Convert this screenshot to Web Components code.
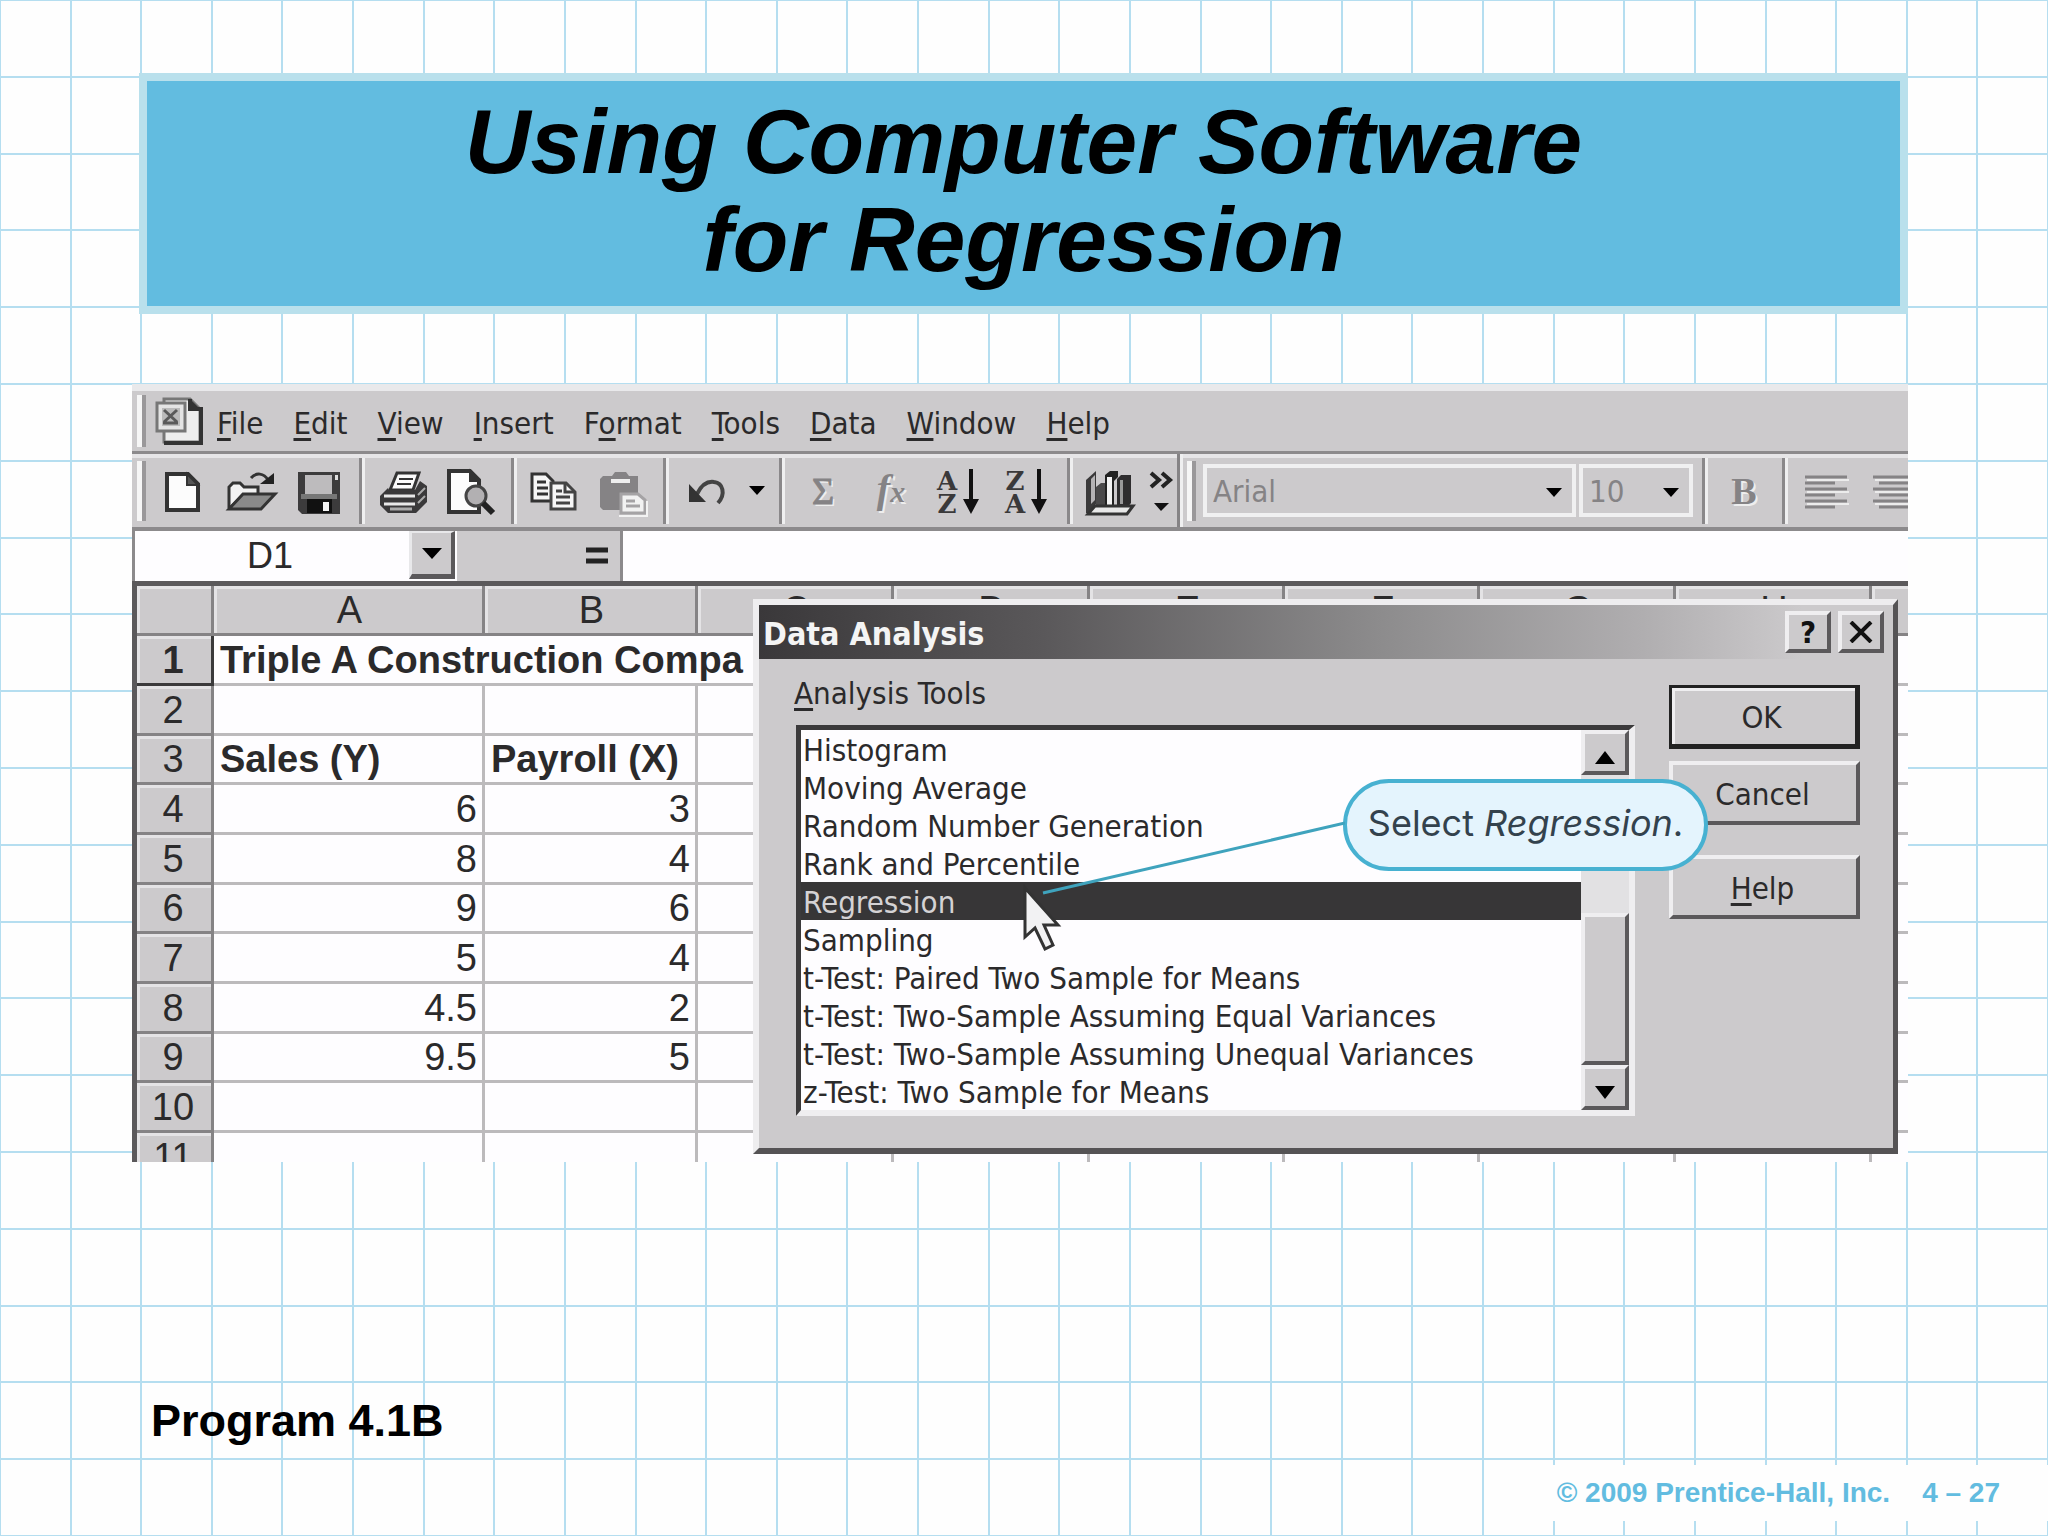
<!DOCTYPE html>
<html lang="en">
<head>
<meta charset="utf-8">
<title>Using Computer Software for Regression</title>
<style>
    body {
        margin: 0;
        font-family: "Liberation Sans", Arial, sans-serif;
        color: #000;
    }
</style>
</head>
<body>
<slide-page>
    <slide-title slot="title">Using Computer Software<br>for Regression</slide-title>
    <excel-window>
        <menu-bar></menu-bar>
        <tool-bar></tool-bar>
        <formula-bar></formula-bar>
        <work-sheet></work-sheet>
        <analysis-dialog slot="dialog"></analysis-dialog>
        <call-out slot="dialog">Select <em>Regression</em>.</call-out>
    </excel-window>
    <span slot="caption">Program 4.1B</span>
    <slide-footer slot="footer"><span>© 2009 Prentice-Hall, Inc.</span><span>4 – 27</span></slide-footer>
</slide-page>

<script>
const UI_FONT = '"DejaVu Sans Condensed", "DejaVu Sans", Tahoma, sans-serif';

class SlidePage extends HTMLElement {
    constructor() {
        super();
        this.attachShadow({mode: "open"}).innerHTML = `
        <style>
            :host {
                display: flex;
                flex-direction: column;
                box-sizing: border-box;
                min-height: 100vh;
                padding: 73px 140px 15px 132px;
                background:
                    repeating-linear-gradient(to right, #b5def0 0 2px, transparent 2px calc(100% / 29)) -1px 0,
                    repeating-linear-gradient(to bottom, #b5def0 0 2px, transparent 2px 5%) 0 -1px,
                    #fefefe;
            }

            .picture {
                margin-top: 70px;
            }

            .caption {
                margin: 233px 0 0 19px;
                font-size: 45px;
                line-height: 52px;
                font-weight: bold;
            }

            .footer {
                margin: auto -140px 0 0;
            }
        </style>
        <slot name="title"></slot>
        <div class="picture"><slot></slot></div>
        <div class="caption"><slot name="caption"></slot></div>
        <div class="footer"><slot name="footer"></slot></div>`;
    }
}

class SlideTitle extends HTMLElement {
    constructor() {
        super();
        this.attachShadow({mode: "open"}).innerHTML = `
        <style>
            :host {
                display: block;
                margin-left: 7px;
                padding: 12px 0 17px;
                border: 8px solid #b9e0ec;
                background: #62bce0;
                text-align: center;
            }

            h1 {
                margin: 0;
                font-size: 91px;
                line-height: 98px;
                font-style: italic;
            }
        </style>
        <h1><slot></slot></h1>`;
    }
}

class SlideFooter extends HTMLElement {
    constructor() {
        super();
        this.attachShadow({mode: "open"}).innerHTML = `
        <style>
            :host {
                display: flex;
                justify-content: flex-end;
                gap: 32px;
                width: fit-content;
                margin-left: auto;
                padding: 12px 48px 12px 16px;
                background: #fefefe;
                color: #62bce0;
                font-size: 28px;
                line-height: 32px;
                font-weight: bold;
            }
        </style>
        <slot></slot>`;
    }
}

class ExcelWindow extends HTMLElement {
    constructor() {
        super();
        this.attachShadow({mode: "open"}).innerHTML = `
        <style>
            :host {
                display: block;
                position: relative;
                overflow: hidden;
                border-top: 7px solid #e9e9eb;
                background: #cccacc;
                color: #2b2a2b;
            }
        </style>
        <slot></slot>
        <slot name="dialog"></slot>`;
    }
}

class MenuBar extends HTMLElement {
    constructor() {
        super();
        const items = ["File", "Edit", "View", "Insert", "Format:1", "Tools", "Data", "Window", "Help"];
        const buttons = items.map(item => {
            const [name, at = 0] = item.split(":");
            const i = Number(at);
            return `<button>${name.slice(0, i)}<u>${name[i]}</u>${name.slice(i + 1)}</button>`;
        }).join("");
        this.attachShadow({mode: "open"}).innerHTML = `
        <style>
            :host {
                display: flex;
                align-items: center;
                height: 60px;
                padding-left: 5px;
                border-bottom: 3px solid #8c8a8c;
            }

            .grip {
                width: 5px;
                height: 52px;
                margin-right: 6px;
                background: #f6f6f6;
                border-right: 4px solid #9a989a;
            }

            svg {
                flex: none;
                margin-right: 13px;
            }

            nav {
                display: flex;
                gap: 30px;
                padding-top: 4px;
            }

            button {
                padding: 0;
                border: 0;
                background: none;
                color: inherit;
                font: 31px/40px ${UI_FONT};
            }

            u {
                text-decoration-thickness: 3px;
                text-underline-offset: 4px;
            }
        </style>
        <span class="grip"></span>
        <svg width="52" height="52" viewBox="0 0 52 52">
            <path d="M12 4h26l10 10v33H12z" fill="#eee" stroke="#777" stroke-width="3"/>
            <path d="M38 4v10h11v34H12" fill="none" stroke="#333" stroke-width="4"/>
            <path d="M38 4l10 10H38z" fill="#333"/>
            <path d="M5 8h28v28H5z" fill="#e4e4e4" stroke="#777" stroke-width="3"/>
            <path d="M10 13h18v18H10z" fill="#bbb"/>
            <path d="M12 15l13 12M25 15L12 27M11 28h15" stroke="#5a5a5a" stroke-width="3"/>
        </svg>
        <nav>${buttons}</nav>`;
    }
}

class ToolBar extends HTMLElement {
    constructor() {
        super();
        const icon = (label, body) => `
            <button aria-label="${label}"><svg width="56" height="56" viewBox="0 0 56 56">${body}</svg></button>`;
        const sep = `<span class="sep"></span>`;
        const arrow = `<svg class="arrow" width="16" height="9" viewBox="0 0 16 9"><path d="M0 0h16L8 9z"/></svg>`;
        const down = `<path d="M40 6v32" stroke="#111" stroke-width="4"/><path d="M32 36h16l-8 15z" fill="#111"/>`;
        const letters = (top, bottom) => `
            <text x="16" y="27">${top}</text><text x="16" y="50">${bottom}</text>${down}`;

        this.attachShadow({mode: "open"}).innerHTML = `
        <style>
            :host {
                display: flex;
                align-items: center;
                height: 73px;
                padding-left: 5px;
                border-bottom: 4px solid #8c8a8c;
                box-shadow: inset 0 4px #e6e5e7;
                overflow: hidden;
            }

            button {
                display: flex;
                flex: none;
                align-items: center;
                justify-content: center;
                width: 68px;
                height: 60px;
                padding: 0;
                border: 0;
                background: none;
                color: #858385;
            }

            .narrow {
                width: 32px;
            }

            .grip {
                flex: none;
                width: 5px;
                height: 60px;
                margin-right: 3px;
                background: #f6f6f6;
                border-right: 4px solid #9a989a;
            }

            .sep {
                flex: none;
                width: 3px;
                height: 66px;
                margin: 0 4px 0 6px;
                background: #8a888a;
                border-right: 3px solid #efeff0;
            }

            .edge {
                flex: none;
                align-self: stretch;
                width: 3px;
                margin-right: 4px;
                background: #858385;
                border-right: 3px solid #efeff0;
            }

            text {
                font: bold 26px "DejaVu Serif", "Liberation Serif", serif;
                text-anchor: middle;
                fill: #3a393a;
            }

            .sum {
                font: 38px/44px "Liberation Serif", serif;
                text-shadow: 2px 2px #eee;
                -webkit-text-stroke: 1px #858385;
            }

            .bold {
                width: 64px;
                font: bold 38px/44px "Liberation Serif", serif;
                text-shadow: 2px 2px #eee;
            }

            .fx {
                font: italic bold 40px/44px "Liberation Serif", serif;
                text-shadow: 2px 2px #eee;
            }

            .fx small {
                font-size: 30px;
            }

            .combo {
                display: grid;
                flex: none;
                align-items: center;
                box-sizing: border-box;
                width: 373px;
                height: 53px;
                margin: 0 3px 0 4px;
                border: 4px solid #f0f0f1;
            }

            .combo.size {
                width: 114px;
                margin-left: 0;
            }

            .combo select {
                grid-area: 1 / 1;
                appearance: none;
                height: 45px;
                padding: 0 0 0 6px;
                border: 0;
                background: none;
                color: #858385;
                font: 31px/40px ${UI_FONT};
            }

            .combo .arrow {
                grid-area: 1 / 1;
                justify-self: end;
                margin: 4px 10px 0 0;
                pointer-events: none;
            }
        </style>
        <span class="grip"></span>
        ${icon("New", `<path d="M12 11h21l10 10v26H12z" fill="#fcfcfc" stroke="#333" stroke-width="4"/><path d="M32 11v11h11z" fill="#555" stroke="#333" stroke-width="2"/>`)}
        ${icon("Open", `
            <path d="M6 45V24l4-4h7l4 4h14v8H20L6 46" fill="#f2f2f2" stroke="#333" stroke-width="3"/>
            <path d="M6 46l14-15h32L38 46z" fill="#8a8a8a" stroke="#333" stroke-width="3"/>
            <path d="M28 15c5-6 13-5 17 2" fill="none" stroke="#333" stroke-width="3"/><path d="M37 21h14V10z" fill="#222"/>`)}
        ${icon("Save", `
            <path d="M7 9h42v42H11l-4-4z" fill="#3c3b3c"/><path d="M14 12h27v19H14z" fill="#bdbbbd"/><path d="M44 12h3v5h-3z" fill="#ddd"/>
            <path d="M10 31h36v5H10z" fill="#777"/><path d="M16 36h25v14H16z" fill="#111"/><path d="M32 39h6v9h-6z" fill="#f4f4f4"/>`)}
        ${sep}
        ${icon("Print", `
            <path d="M22 10h22l-6 17H15z" fill="#fafafa" stroke="#333" stroke-width="3"/>
            <path d="M24 16h14M22 21h14" stroke="#333" stroke-width="2"/>
            <path d="M13 25l-8 8v9l8 8h28l11-11V23l-7-5-5 9H14z" fill="#3a393a"/>
            <path d="M9 33h31M9 41h31" stroke="#e8e8e8" stroke-width="3"/><path d="M15 46h22" stroke="#aaa" stroke-width="3"/>
            <path d="M43 32l7-7M43 40l7-7" stroke="#aaa" stroke-width="2"/>`)}
        ${icon("Print preview", `
            <path d="M6 8h21l9 9v32H6z" fill="#fcfcfc" stroke="#333" stroke-width="4"/><path d="M27 8v10h9z" fill="#333" stroke="#333" stroke-width="2"/>
            <circle cx="33" cy="33" r="10" fill="#b2b0b2" stroke="#444" stroke-width="3"/><path d="M40 40l10 10" stroke="#222" stroke-width="6"/>`)}
        ${sep}
        ${icon("Copy", `
            <path d="M5 11h14l7 7v20H5z" fill="#f6f6f6" stroke="#333" stroke-width="3"/><path d="M10 19h9M10 25h11M10 31h11" stroke="#333" stroke-width="3"/>
            <path d="M24 20h15l9 9v17H24z" fill="#f6f6f6" stroke="#444" stroke-width="3"/><path d="M38 20v9h10" fill="none" stroke="#444" stroke-width="3"/>
            <path d="M29 28h6M29 34h14M29 40h14" stroke="#444" stroke-width="3"/>`)}
        ${icon("Paste", `
            <path d="M8 13h9l3-4h11l3 4h9v34H8l-3-3V16z" fill="#858385"/><path d="M16 16h19v4H16z" fill="#eee"/>
            <path d="M26 31h17l7 6v13H26z" fill="#f2f2f2" stroke="#a5a3a5" stroke-width="3"/><path d="M31 38h9M31 43h14" stroke="#a5a3a5" stroke-width="3"/>
            <path d="M24 53h28V38" fill="none" stroke="#f2f2f2" stroke-width="2"/>`)}
        ${sep}
        ${icon("Undo", `<path d="M18 31c4-8 10-13 17-12 9 1 12 12 4 21" fill="none" stroke="#444" stroke-width="4"/><path d="M10 21l17 18H10z" fill="#333"/>`)}
        <button class="narrow" aria-label="Undo list">${arrow}</button>
        ${sep}
        <button class="sum" aria-label="AutoSum">Σ</button>
        <button class="fx" aria-label="Paste function"><span>f<small>x</small></span></button>
        ${icon("Sort ascending", letters("A", "Z"))}
        ${icon("Sort descending", letters("Z", "A"))}
        ${sep}
        ${icon("Chart wizard", `
            <path d="M3 17l10-9v33l-8 9H3z" fill="#3a393a"/><path d="M8 16l4-4v25l-4 4z" fill="#b5b3b5"/>
            <path d="M13 24l5-4h6v24H13z" fill="#4a494a"/><path d="M22 12l5-4h8v6l-4 4v26h-9z" fill="#222"/><path d="M24 14h5v29h-5z" fill="#f4f4f4"/>
            <path d="M34 16l4-4h10v28l-4 5H34z" fill="#2e2d2e"/><path d="M37 17h3v24h-3z" fill="#999"/>
            <path d="M5 51l7-8h38l-6 8z" fill="#e8e8e8" stroke="#333" stroke-width="3"/>`)}
        <button class="narrow" aria-label="More buttons">
            <svg width="28" height="44" viewBox="0 0 28 44">
                <path d="M4 4l8 7-8 7M15 4l8 7-8 7" fill="none" stroke="#222" stroke-width="4"/><path d="M7 34h15l-8 8z" fill="#111"/>
            </svg>
        </button>
        <span class="edge"></span>
        <span class="grip"></span>
        <div class="combo"><select aria-label="Font"><option>Arial</option></select>${arrow}</div>
        <div class="combo size"><select aria-label="Font size"><option>10</option></select>${arrow}</div>
        ${sep}
        <button class="bold" aria-label="Bold">B</button>
        ${sep}
        ${icon("Align left", `<path d="M7 14h42M7 20h30M7 26h42M7 32h30M7 38h42M7 44h30" stroke="#858385" stroke-width="3"/><path d="M9 17h42M9 29h42M9 41h42" stroke="#ececec" stroke-width="2"/>`)}
        ${icon("Center", `<path d="M7 14h42M13 20h30M7 26h42M13 32h30M7 38h42M13 44h30" stroke="#858385" stroke-width="3"/><path d="M9 17h42M9 29h42M9 41h42" stroke="#ececec" stroke-width="2"/>`)}`;
    }
}

class FormulaBar extends HTMLElement {
    constructor() {
        super();
        this.attachShadow({mode: "open"}).innerHTML = `
        <style>
            :host {
                display: flex;
                height: 50px;
                border-left: 3px solid #8c8a8c;
                background: #fefdff;
            }

            input {
                box-sizing: border-box;
                width: 274px;
                padding: 0 4px 0 0;
                border: 0;
                background: none;
                color: inherit;
                font: 36px/46px "Liberation Sans", Arial, sans-serif;
                text-align: center;
            }

            input.formula {
                flex: 1;
                min-width: 0;
                text-align: left;
            }

            .drop {
                width: 46px;
                height: 48px;
                padding: 2px 0 0;
                border: 0 solid;
                border-width: 2px 4px 5px 3px;
                border-color: #e8e8ea #5b595b #5b595b #e8e8ea;
                background: #cccacc;
            }

            .equals {
                display: flex;
                align-items: center;
                justify-content: flex-end;
                box-sizing: border-box;
                width: 166px;
                margin-left: 2px;
                padding: 0 12px 0 0;
                border: 0;
                border-right: 3px solid #8c8a8c;
                background: #cccacc;
            }
        </style>
        <input aria-label="Name box" value="D1">
        <button class="drop" aria-label="Names"><svg width="20" height="11" viewBox="0 0 20 11"><path d="M0 0h20L10 11z"/></svg></button>
        <button class="equals" aria-label="Edit formula"><svg width="22" height="18" viewBox="0 0 22 18"><path d="M0 3h22M0 14h22" stroke="#222" stroke-width="5"/></svg></button>
        <input class="formula" aria-label="Formula">`;
    }
}

class WorkSheet extends HTMLElement {
    constructor() {
        super();
        const rows = [
            ["<b>Triple A Construction Compa</b>"],
            ["", ""],
            ["<b>Sales (Y)</b>", "<b>Payroll (X)</b>"],
            ["6", "3"], ["8", "4"], ["9", "6"], ["5", "4"], ["4.5", "2"], ["9.5", "5"],
            ["", ""], ["", ""]
        ];
        const cell = (text, span) => `<td${span ? ` colspan="${span}"` : ""}${/^\d/.test(text) ? ` class="num"` : ""}>${text}</td>`;
        const body = rows.map((row, i) => {
            const cells = row.length === 1 ? cell(row[0], 3) : row.map(text => cell(text)).join("") + "<td></td>";
            return `<tr><th scope="row"${i === 0 ? ` class="current"` : ""}>${i + 1}</th>${cells}${"<td></td>".repeat(6)}</tr>`;
        }).join("");
        const heads = ["", "A", "B", "C", "D", "E", "F", "G", "H", ""].map(name => `<th scope="col">${name}</th>`).join("");
        this.attachShadow({mode: "open"}).innerHTML = `
        <style>
            :host {
                display: block;
                height: 576px;
                overflow: hidden;
                border-top: 5px solid #5b595b;
                border-left: 5px solid #5b595b;
                background: #fefdff;
            }

            table {
                width: 100%;
                table-layout: fixed;
                border-collapse: separate;
                border-spacing: 0;
                font-size: 38px;
                line-height: 46px;
            }

            th, td {
                box-sizing: border-box;
                height: 50px;
                padding: 0 5px 0 6px;
                border: solid #bcbabc;
                border-width: 0 3px 3px 0;
                text-align: left;
                white-space: nowrap;
            }

            tbody tr:nth-child(3n) > * {
                height: 49px;
                line-height: 45px;
            }

            th {
                padding: 0 0 0 3px;
                border-color: #858385;
                background: #cccacc;
                box-shadow: inset 3px 3px #e4e3e5;
                font-weight: normal;
                text-align: center;
            }

            tbody th {
                padding: 0 2px 0 0;
            }

            th.current {
                border-color: #3b3a3b;
                font-weight: bold;
            }

            th:last-child, td:last-child {
                border-right: 0;
            }

            .num {
                text-align: right;
            }
        </style>
        <table>
            <colgroup>
                <col style="width:77px"><col style="width:271px"><col style="width:213px">
                <col style="width:196px"><col style="width:196px"><col style="width:195px">
                <col style="width:195px"><col style="width:196px"><col style="width:196px"><col>
            </colgroup>
            <thead><tr>${heads}</tr></thead>
            <tbody>${body}</tbody>
        </table>`;
    }
}

class AnalysisDialog extends HTMLElement {
    constructor() {
        super();
        const tools = [
            "Histogram", "Moving Average", "Random Number Generation", "Rank and Percentile", "Regression",
            "Sampling", "t-Test: Paired Two Sample for Means", "t-Test: Two-Sample Assuming Equal Variances",
            "t-Test: Two-Sample Assuming Unequal Variances", "z-Test: Two Sample for Means"
        ];
        const options = tools.map(name => `<option${name === "Regression" ? " selected" : ""}>${name}</option>`).join("");
        this.attachShadow({mode: "open"}).innerHTML = `
        <style>
            :host {
                position: absolute;
                top: 208px;
                left: 621px;
                right: 10px;
                box-sizing: border-box;
                padding-bottom: 32px;
                border: solid;
                border-width: 6px 5px 6px 6px;
                border-color: #eeedef #555355 #555355 #eeedef;
                background: #cccacc;
                font: 31px/36px ${UI_FONT};
            }

            header {
                display: flex;
                align-items: center;
                gap: 7px;
                height: 54px;
                padding: 0 9px 0 4px;
                background: linear-gradient(to right, #3a383a, #5a585a 25%, #8d8c8d 55%, #b0aeb0 78%, #cccacc 92%);
                color: #f4f4f4;
            }

            h2 {
                flex: 1;
                margin: 0;
                padding-top: 3px;
                font-size: 32px;
            }

            button {
                box-sizing: border-box;
                padding: 0;
                border: solid;
                border-width: 4px;
                border-color: #efeef0 #5b595b #5b595b #efeef0;
                background: #cccacc;
                color: inherit;
                font: inherit;
            }

            header button {
                width: 46px;
                height: 42px;
                color: #111;
                font-weight: bold;
                line-height: 32px;
            }

            header svg {
                display: block;
                margin: auto;
            }

            .content {
                display: flex;
                justify-content: space-between;
                padding: 16px 33px 0 35px;
            }

            label {
                display: block;
                margin-bottom: 14px;
            }

            u {
                text-decoration-thickness: 3px;
                text-underline-offset: 4px;
            }

            .list {
                display: flex;
                width: 828px;
                margin-left: 2px;
                border: solid;
                border-width: 5px 6px 6px 5px;
                border-color: #3b3a3b #efeef0 #efeef0 #3b3a3b;
                background: #fefdff;
            }

            select {
                flex: 1;
                appearance: none;
                height: 380px;
                padding: 0;
                border: 0;
                border-radius: 0;
                outline: 0;
                overflow: hidden;
                background: none;
                color: inherit;
                font: inherit;
            }

            option {
                min-height: 36px;
                padding: 2px 0 0 2px;
                line-height: 36px;
            }

            option:checked {
                background: linear-gradient(#373637, #373637);
                -webkit-text-fill-color: #d4d2d4;
            }

            .scroll {
                display: flex;
                flex-direction: column;
                width: 48px;
                background: #e2e1e3;
            }

            .scroll button {
                height: 45px;
            }

            .scroll span {
                height: 152px;
                margin-top: auto;
                box-sizing: border-box;
                border: solid;
                border-width: 4px;
                border-color: #efeef0 #5b595b #5b595b #efeef0;
                background: #cccacc;
            }

            .actions {
                display: flex;
                flex-direction: column;
                gap: 12px;
                width: 191px;
                margin-top: 10px;
            }

            .actions button {
                height: 64px;
                padding: 2px 4px 0 0;
            }

            .actions .default {
                border-color: #222;
                border-width: 3px 5px 5px 3px;
                box-shadow: inset 3px 3px #efeef0;
            }

            .actions .help {
                margin-top: 18px;
            }
        </style>
        <header>
            <h2>Data Analysis</h2>
            <button aria-label="Context help">?</button>
            <button aria-label="Close"><svg width="24" height="22" viewBox="0 0 24 22"><path d="M2 1l20 20M22 1L2 21" stroke="#111" stroke-width="4"/></svg></button>
        </header>
        <div class="content">
            <div>
                <label for="tools"><u>A</u>nalysis Tools</label>
                <div class="list">
                    <select id="tools" size="10">${options}</select>
                    <div class="scroll">
                        <button aria-label="Scroll up"><svg width="20" height="13" viewBox="0 0 20 13"><path d="M0 13h20L10 0z"/></svg></button>
                        <span></span>
                        <button aria-label="Scroll down"><svg width="20" height="13" viewBox="0 0 20 13"><path d="M0 0h20L10 13z"/></svg></button>
                    </div>
                </div>
            </div>
            <div class="actions">
                <button class="default">OK</button>
                <button>Cancel</button>
                <button class="help"><u>H</u>elp</button>
            </div>
        </div>`;
    }
}

class CallOut extends HTMLElement {
    constructor() {
        super();
        this.attachShadow({mode: "open"}).innerHTML = `
        <style>
            :host {
                display: flex;
                position: absolute;
                top: 388px;
                right: 200px;
            }

            /* leader line and pointer start at the selected list row */
            svg {
                position: absolute;
                top: 0;
                right: 100%;
                margin-right: -2px;
            }

            p {
                box-sizing: border-box;
                width: 365px;
                margin: 0;
                padding: 16px 0 20px;
                border: 4px solid #47b1d1;
                border-radius: 46px;
                background: #e4f4fd;
                color: #33424d;
                font: 36px/48px Inter, Lato, sans-serif;
                text-align: center;
                white-space: nowrap;
            }
        </style>
        <svg width="324" height="176" viewBox="0 0 324 176">
            <path d="M324 44L22 114" stroke="#3fa3bd" stroke-width="3"/>
            <path d="M4 109v49l10-9 10 21 8-4-9-20h14z" fill="#f2f2f3" stroke="#333" stroke-width="3"/>
        </svg>
        <p><slot></slot></p>`;
    }
}

customElements.define("slide-page", SlidePage);
customElements.define("slide-title", SlideTitle);
customElements.define("slide-footer", SlideFooter);
customElements.define("excel-window", ExcelWindow);
customElements.define("menu-bar", MenuBar);
customElements.define("tool-bar", ToolBar);
customElements.define("formula-bar", FormulaBar);
customElements.define("work-sheet", WorkSheet);
customElements.define("analysis-dialog", AnalysisDialog);
customElements.define("call-out", CallOut);
</script>
</body>
</html>
